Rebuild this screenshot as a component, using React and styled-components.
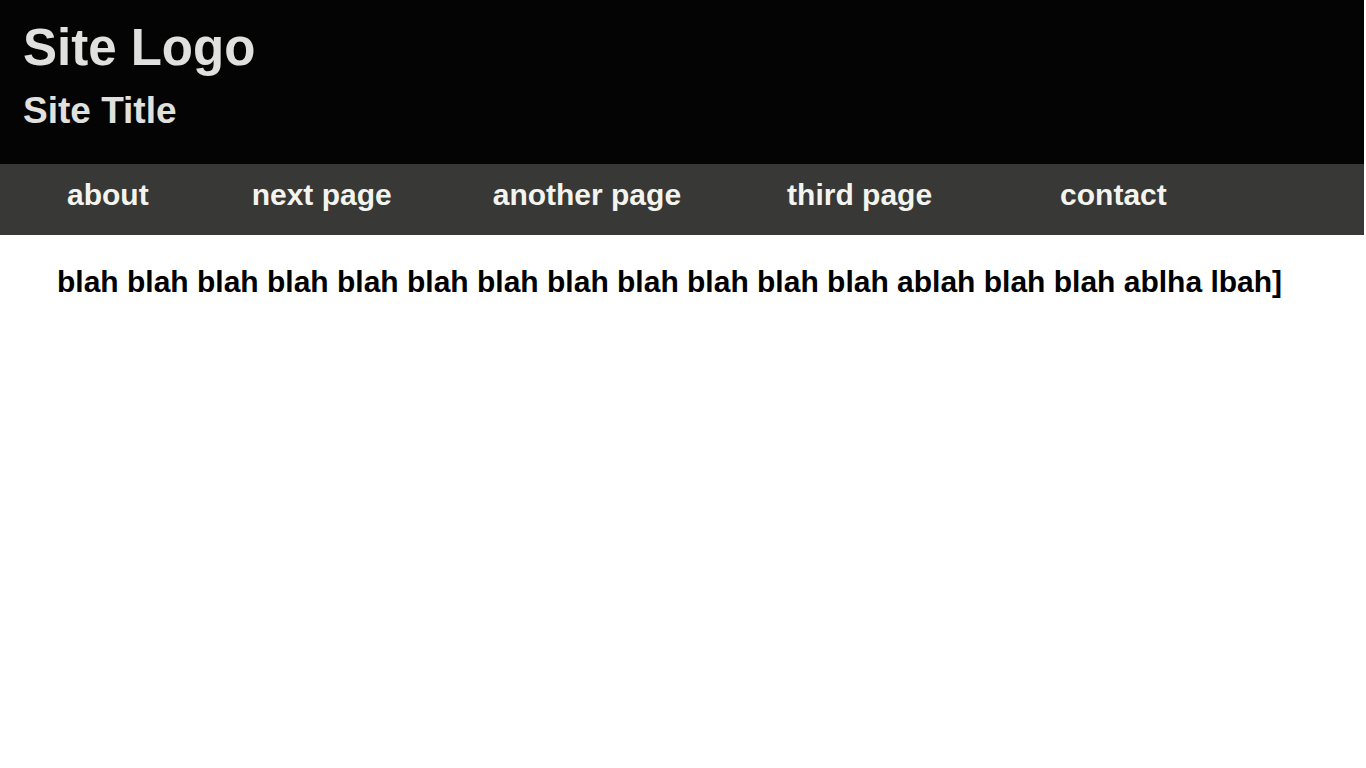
import styled, { createGlobalStyle } from "styled-components";

const GlobalStyle = createGlobalStyle`
  * {
    box-sizing: border-box;
  }

  body {
    margin: 0;
    background: #fff;
    font-family: "Liberation Sans", Arial, Helvetica, sans-serif;
    font-weight: 700;
  }
`;

const Page = styled.div`
  display: flex;
  flex-direction: column;
  min-height: 100vh;
`;

const Header = styled.header`
  margin-right: 2px;
  padding: 22px 22px 35px 23px;
  background: #040404;
  color: #e0e0de;
`;

const Logo = styled.div`
  font-size: 51px;
  line-height: 1;
`;

const SiteTitle = styled.h1`
  margin: 19px 0 0;
  font-size: 37px;
  line-height: 1;
  font-weight: 700;
`;

const Nav = styled.nav`
  margin-right: 2px;
  background: #383836;
`;

const NavList = styled.ul`
  display: flex;
  margin: 0;
  padding: 16px 0 25px 67px;
  list-style: none;
`;

const NavItem = styled.li`
  margin-left: ${({ $space }) => $space || 0}px;
  font-size: 30px;
  line-height: 1;
  color: #f4f4ef;
`;

const Content = styled.main`
  padding: 32px 57px;
`;

const Text = styled.p`
  margin: 0;
  font-size: 30px;
  line-height: 1;
  color: #000;
`;

const links = [
  { label: "about", space: 0 },
  { label: "next page", space: 103 },
  { label: "another page", space: 101 },
  { label: "third page", space: 106 },
  { label: "contact", space: 128 },
];

const App = () => (
  <Page>
    <GlobalStyle />
    <Header>
      <Logo>Site Logo</Logo>
      <SiteTitle>Site Title</SiteTitle>
    </Header>
    <Nav>
      <NavList>
        {links.map((link) => (
          <NavItem key={link.label} $space={link.space}>
            {link.label}
          </NavItem>
        ))}
      </NavList>
    </Nav>
    <Content>
      <Text>
        blah blah blah blah blah blah blah blah blah blah blah blah ablah blah
        blah ablha lbah]
      </Text>
    </Content>
  </Page>
);

export default App;
